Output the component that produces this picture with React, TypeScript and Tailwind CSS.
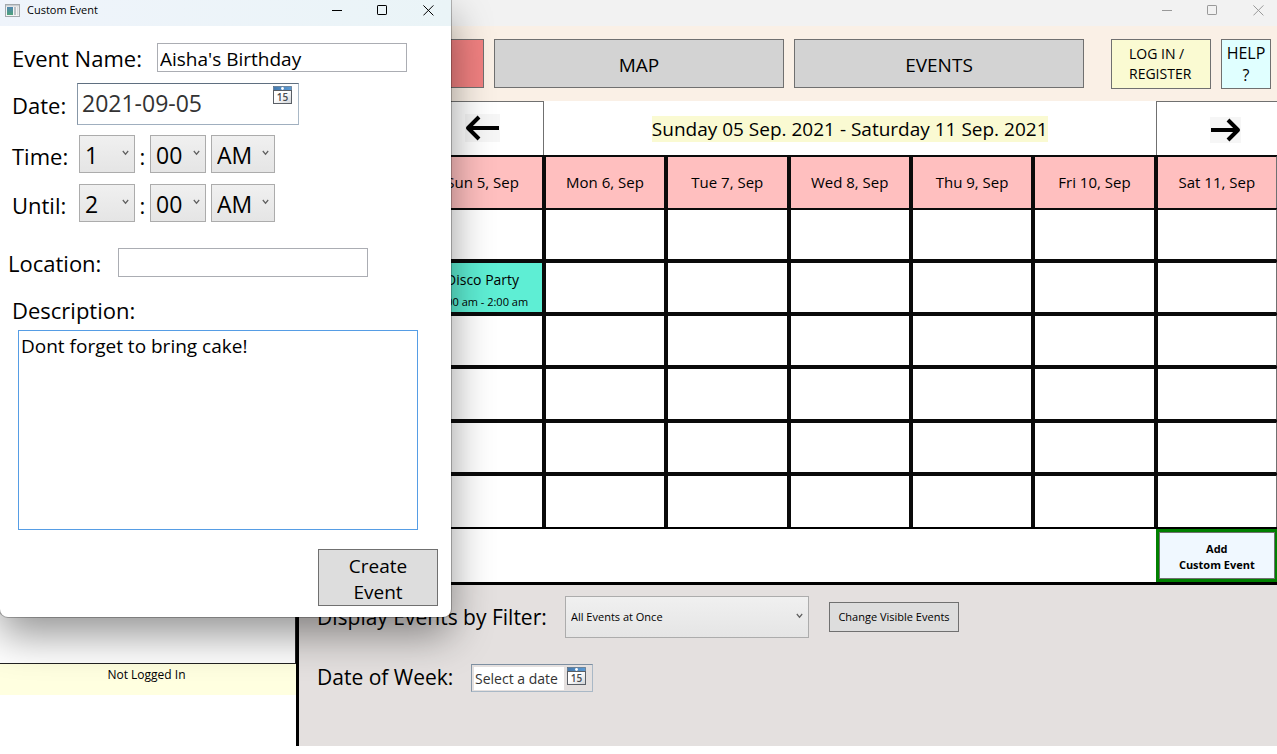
import React from "react";

const days = ["Sun 5, Sep", "Mon 6, Sep", "Tue 7, Sep", "Wed 8, Sep", "Thu 9, Sep", "Fri 10, Sep", "Sat 11, Sep"];
const slots = [0, 1, 2, 3, 4, 5];

function WindowControls({ label }: { label: string }) {
  return (
    <div className="flex h-full items-start">
      <button aria-label={`Minimize ${label}`} className="flex h-5 w-[46px] items-center justify-center">
        <svg width="11" height="11" viewBox="0 0 11 11" stroke="currentColor" fill="none" shapeRendering="crispEdges">
          <path d="M0 5.5H10" />
        </svg>
      </button>
      <button aria-label={`Maximize ${label}`} className="flex h-5 w-[45px] items-center justify-center">
        <svg width="11" height="11" viewBox="0 0 11 11" stroke="currentColor" fill="none">
          <rect x="0.5" y="0.5" width="9" height="9" rx="0.6" />
        </svg>
      </button>
      <button aria-label={`Close ${label}`} className="flex h-5 w-[46px] items-center justify-center">
        <svg width="11" height="11" viewBox="0 0 11 11" stroke="currentColor" fill="none">
          <path d="M0.4 0.4L10.4 10.4M10.4 0.4L0.4 10.4" />
        </svg>
      </button>
    </div>
  );
}

function CalendarIcon() {
  return (
    <svg width="20" height="19" viewBox="0 0 20 19">
      <defs>
        <linearGradient id="dayTop" x1="0" y1="0" x2="1" y2="0">
          <stop offset="0" stopColor="#4579ad" />
          <stop offset="1" stopColor="#5b9bd5" />
        </linearGradient>
        <linearGradient id="dayPage" x1="0" y1="0" x2="1" y2="1">
          <stop offset="0.4" stopColor="#ffffff" />
          <stop offset="1" stopColor="#cfd2d6" />
        </linearGradient>
      </defs>
      <rect x="0.5" y="4.5" width="18" height="13" fill="url(#dayPage)" stroke="#5a5f66" />
      <rect x="0.5" y="0.5" width="18" height="4" fill="url(#dayTop)" stroke="#4a6076" strokeWidth="0.6" />
      <path d="M0 4.5H19" stroke="#5a5f66" />
      <circle cx="9.5" cy="2.5" r="1.4" fill="#fff" />
      <text x="9.5" y="15" textAnchor="middle" fontSize="10" fontWeight="600" fontFamily="Open Sans, sans-serif" fill="#484c50">15</text>
    </svg>
  );
}

function Chevron() {
  return (
    <svg className="pointer-events-none absolute top-1/2 right-[6px] -mt-1" width="7" height="6" viewBox="0 0 7 6" fill="none" stroke="#606060" strokeWidth="1.2">
      <path d="M0.8 1L3.5 4.2L6.2 1" />
    </svg>
  );
}

function Combo({ label, value, width }: { label: string; value: string; width: string }) {
  return (
    <div className={`relative h-[38px] ${width}`}>
      <select
        aria-label={label}
        defaultValue={value}
        className="h-full w-full appearance-none border border-[#acacac] bg-linear-to-b from-[#f0f0f0] to-[#e5e5e5] pl-[5px] pt-[2px] text-[23px] leading-8"
      >
        <option>{value}</option>
      </select>
      <Chevron />
    </div>
  );
}

function TimeRow({ label, hour }: { label: string; hour: string }) {
  return (
    <div className="flex items-center pl-3">
      <span className="w-[67px] pt-1 text-[22px] leading-8">{label}</span>
      <Combo label={`${label} hour`} value={hour} width="w-14" />
      <span className="w-[15px] pt-1 text-center text-[22px] leading-8">:</span>
      <Combo label={`${label} minutes`} value="00" width="w-14" />
      <div className="w-[5px]" />
      <Combo label={`${label} half of day`} value="AM" width="w-16" />
    </div>
  );
}

function EventDialog() {
  return (
    <section
      aria-label="Custom Event"
      className="absolute top-0 left-0 z-10 w-[451px] overflow-hidden rounded-b-lg bg-white pb-[11px] shadow-[0_0_0_1px_rgba(0,0,0,0.25),0_18px_42px_rgba(0,0,0,0.42)]"
    >
      <div className="flex h-[26px] justify-between bg-linear-to-r from-[#eff4fb] to-[#eaf4f7]">
        <div className="flex h-[21px] items-center gap-[7px] pl-[5px]">
          <svg width="15" height="13" viewBox="0 0 15 13">
            <defs>
              <linearGradient id="appPane" x1="0" y1="0" x2="0" y2="1">
                <stop offset="0" stopColor="#4f86b0" />
                <stop offset="1" stopColor="#4fa27a" />
              </linearGradient>
            </defs>
            <rect x="0.5" y="0.5" width="14" height="12" fill="#f4f4f4" stroke="#a3a9ad" />
            <rect x="1" y="1" width="13" height="1.4" fill="#c9cdd0" />
            <rect x="2" y="3" width="6" height="8" fill="url(#appPane)" />
            <rect x="9" y="3" width="2" height="8" fill="#b9c0c4" />
            <rect x="12" y="3" width="1.4" height="8" fill="#d9dcde" />
          </svg>
          <h2 className="text-[11px]">Custom Event</h2>
        </div>
        <WindowControls label="dialog" />
      </div>
      <form className="flex flex-col pt-[17px]">
        <div className="flex items-center pl-3">
          <label htmlFor="name" className="w-[145px] text-[22px] leading-6">Event Name:</label>
          <input id="name" defaultValue="Aisha's Birthday" className="h-[29px] w-[250px] border border-[#abadb3] px-[2px] pt-[2px] text-[19px] leading-6 outline-none" />
        </div>
        <div className="mt-[11px] flex items-center pl-3">
          <label htmlFor="date" className="w-[65px] pt-[2px] text-[22px] leading-8">Date:</label>
          <div className="flex h-[42px] w-[222px] items-start border border-t-[#5f6f80] border-r-[#a9b8c6] border-b-[#a0afbf] border-l-[#8797a7] pt-[2px] pr-[5px]">
            <input id="date" defaultValue="2021-09-05" className="h-[34px] min-w-0 flex-1 pl-1 text-[23px] leading-8 text-[#333] outline-none" />
            <button type="button" aria-label="Open calendar"><CalendarIcon /></button>
          </div>
        </div>
        <div className="mt-[10px] flex flex-col gap-[11px]">
          <TimeRow label="Time:" hour="1" />
          <TimeRow label="Until:" hour="2" />
        </div>
        <div className="mt-[26px] flex items-center pl-2">
          <label htmlFor="location" className="w-[110px] text-[22px] leading-6">Location:</label>
          <input id="location" className="h-[29px] w-[250px] border border-[#abadb3] px-[2px] text-[19px] outline-none" />
        </div>
        <label htmlFor="description" className="mt-[17px] pl-3 text-[22px] leading-8">Description:</label>
        <textarea
          id="description"
          defaultValue="Dont forget to bring cake!"
          className="mt-1 mr-[33px] ml-[18px] h-[200px] resize-none border border-[#569de5] px-[2px] pt-[2px] text-[19px] leading-[26px] outline-none"
        />
        <button type="button" className="mt-[19px] mr-[13px] h-[57px] w-[120px] self-end border border-[#707070] bg-[#ddd] px-5 pt-[2px] text-[19px] leading-[26px]">
          Create Event
        </button>
      </form>
    </section>
  );
}

function ArrowLeft() {
  return (
    <svg width="35" height="28" viewBox="0 0 35 28" fill="none">
      <rect width="35" height="28" fill="#f6f6f6" />
      <path d="M34 14H3M14 3L3 14L14 25" stroke="#000" strokeWidth="4" strokeLinejoin="round" />
    </svg>
  );
}

function ArrowRight() {
  return (
    <svg width="31" height="26" viewBox="0 0 31 26" fill="none">
      <rect width="31" height="26" fill="#f6f6f6" />
      <path d="M1 13H28M18 3L28 13L18 23" stroke="#000" strokeWidth="4" strokeLinejoin="round" />
    </svg>
  );
}

export default function App() {
  return (
    <div className="relative overflow-hidden bg-white pb-2 font-['Open_Sans','Noto_Sans',sans-serif] text-black">
      <div className="-mr-1 flex h-[26px] justify-end bg-[#f2f2f2] text-[#999]">
        <WindowControls label="window" />
      </div>

      <header className="flex h-[75px] items-start justify-end gap-[10px] bg-[#faf0e6] pt-[13px] pr-[6px]">
        <button aria-label="Calendar" className="h-[49px] w-[290px] border border-[#707070] bg-[#f08080]" />
        <button className="h-[49px] w-[290px] border border-[#707070] bg-[#d3d3d3] pt-1 text-[19px]">MAP</button>
        <button className="h-[49px] w-[290px] border border-[#707070] bg-[#d3d3d3] pt-1 text-[19px]">EVENTS</button>
        <button className="ml-[17px] h-[50px] w-[100px] border border-[#707070] bg-[#fafad2] pl-[17px] text-left text-[14px] leading-5">
          LOG IN /<br />REGISTER
        </button>
        <button className="h-[50px] w-[50px] border border-[#707070] bg-[#e0ffff] text-[16px] leading-[22px]">
          HELP<br />?
        </button>
      </header>

      <div className="flex">
        <aside className="flex w-[299px] shrink-0 flex-col border-r-[3px] border-black">
          <div className="flex-1 border-r border-b border-[#222]" />
          <p className="h-[31px] bg-[#ffffe0] pt-[3px] pr-[3px] text-center text-[12px] leading-4">Not Logged In</p>
          <div className="h-[51px]" />
        </aside>

        <main className="-mr-px min-w-0 flex-1">
          <div className="flex h-[54px]">
            <div className="w-1/8" />
            <button aria-label="Previous week" className="flex w-1/8 items-center justify-center border border-b-0 border-[#707070] pb-[2px]">
              <ArrowLeft />
            </button>
            <div className="flex w-5/8 items-center justify-center pt-[2px]">
              <h1 className="bg-[#fafad2] text-[19px] leading-[26px]">Sunday 05 Sep. 2021 - Saturday 11 Sep. 2021</h1>
            </div>
            <button aria-label="Next week" className="flex w-1/8 items-center justify-center border border-r-0 border-b-0 border-[#707070] pt-[2px] pl-4">
              <ArrowRight />
            </button>
          </div>

          <table className="h-[374px] w-full table-fixed border-separate border-spacing-0 border-b-2 border-black">
            <thead>
              <tr className="h-[53px]">
                <td className="border-2 border-b-0 border-[#0a0a0a]" />
                {days.map((day) => (
                  <th key={day} className="border-2 border-b-0 border-[#0a0a0a] bg-[#ffbfbf] p-0 text-[15px] font-normal whitespace-nowrap last:border-r-[#707070]">
                    {day}
                  </th>
                ))}
              </tr>
            </thead>
            <tbody>
              {slots.map((slot) => (
                <tr key={slot} className="group h-[53px]">
                  <td className="border-2 border-[#0a0a0a] p-0 group-last:border-b-0" />
                  {days.map((day, i) =>
                    slot === 1 && i === 0 ? (
                      <td key={day} className="border-2 border-[#0a0a0a] bg-[#5eeed4] p-0 text-center align-bottom whitespace-nowrap">
                        <div className="text-[14px] leading-6">Disco Party</div>
                        <div className="text-[11px] leading-5">1:00 am - 2:00 am</div>
                      </td>
                    ) : (
                      <td key={day} className="border-2 border-[#0a0a0a] p-0 group-last:border-b-0 last:border-r-[#707070]" />
                    )
                  )}
                </tr>
              ))}
            </tbody>
          </table>

          <div className="flex h-[53px] justify-end">
            <div className="w-1/8 border-[3px] border-[#008000]">
              <button className="h-full w-full border border-[#707070] bg-[#f0f8ff] pt-[2px] text-[11px] leading-4 font-bold">
                Add<br />Custom Event
              </button>
            </div>
          </div>

          <section aria-label="Filters" className="border-t-[3px] border-black bg-[#e4e0df] pt-[11px] pb-[54px] pl-[18px]">
            <div className="flex items-center">
              <label htmlFor="filter" className="w-[248px] text-[21px] leading-8 whitespace-nowrap">Display Events by Filter:</label>
              <div className="relative h-[42px] w-[244px]">
                <select id="filter" className="h-full w-full appearance-none border border-[#acacac] bg-linear-to-b from-[#f0f0f0] to-[#e5e5e5] pl-[5px] text-[11px]">
                  <option>All Events at Once</option>
                </select>
                <Chevron />
              </div>
              <button className="ml-5 h-[30px] w-[130px] border border-[#707070] bg-[#ddd] text-[11px] whitespace-nowrap">Change Visible Events</button>
            </div>
            <div className="mt-[26px] flex items-center">
              <label htmlFor="week" className="w-[154px] pb-[2px] text-[21px] leading-6 whitespace-nowrap">Date of Week:</label>
              <div className="flex h-7 w-[122px] items-start border border-t-[#7d8fa1] border-r-[#a9b8c6] border-b-[#a9b8c6] border-l-[#8797a7] pt-[2px] pr-[5px] pl-[2px]">
                <input id="week" placeholder="Select a date" className="mr-[3px] h-[23px] min-w-0 flex-1 bg-white pl-px text-[14px] outline-none placeholder:text-[#333]" />
                <button type="button" aria-label="Pick a week"><CalendarIcon /></button>
              </div>
            </div>
          </section>
        </main>
      </div>

      <EventDialog />
    </div>
  );
}
